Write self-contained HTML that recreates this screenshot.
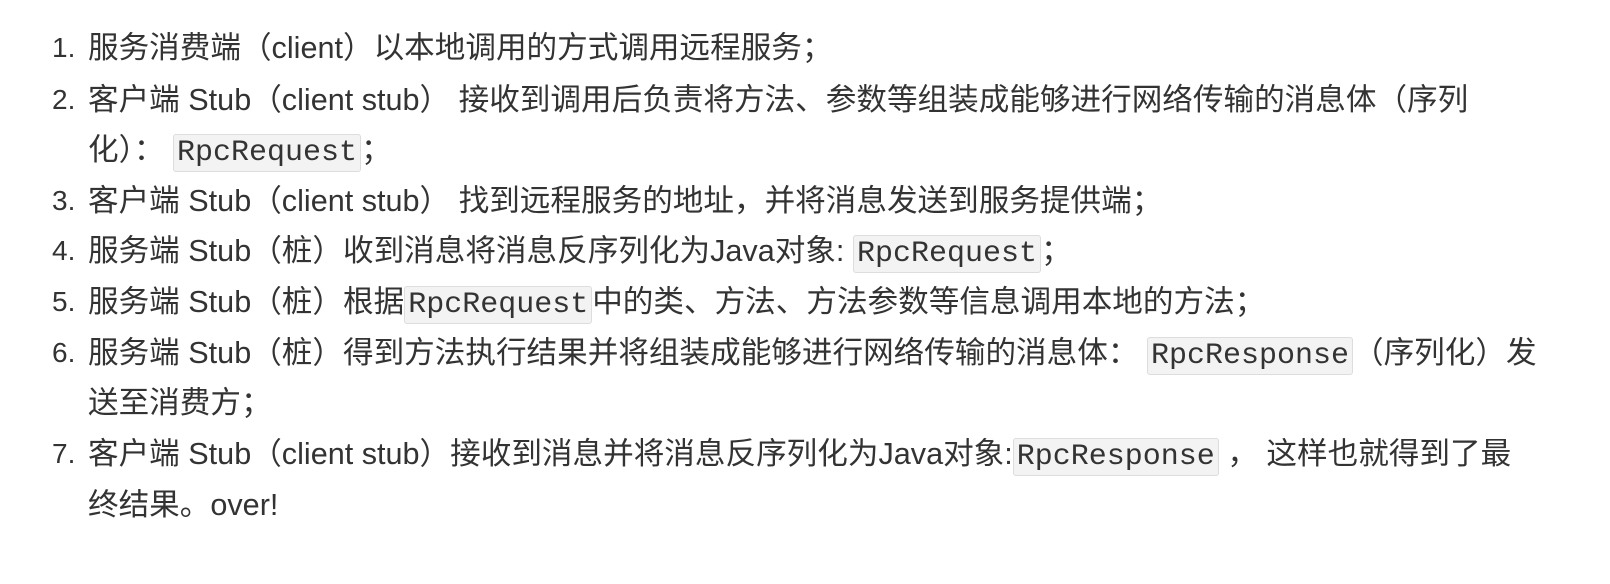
<!DOCTYPE html>
<html><head><meta charset="utf-8"><style>
body{margin:0;width:1610px;height:584px;background:#fff;overflow:hidden;font-family:"Liberation Sans","Noto Sans CJK SC",sans-serif;font-size:30.6px;color:#333;}
.l{position:absolute;left:88px;height:50px;line-height:50px;white-space:nowrap;}
.n{position:absolute;left:52px;height:50px;line-height:50px;font-size:28px;}
code{font-family:"Liberation Mono","DejaVu Sans Mono",monospace;font-size:30px;background:#f3f3f3;border:1px solid #ddd;border-radius:3px;padding:1px 3px;color:#333;}
</style></head><body>
<div class="n" style="top:23px">1.</div><div class="l" style="top:23px">服务消费端（client）以本地调用的方式调用远程服务；</div>
<div class="n" style="top:75px">2.</div><div class="l" style="top:75px">客户端 Stub（client stub） 接收到调用后负责将方法、参数等组装成能够进行网络传输的消息体（序列</div>
<div class="l" style="top:125px">化）： <code>RpcRequest</code>；</div>
<div class="n" style="top:176px">3.</div><div class="l" style="top:176px">客户端 Stub（client stub） 找到远程服务的地址，并将消息发送到服务提供端；</div>
<div class="n" style="top:226px">4.</div><div class="l" style="top:226px">服务端 Stub（桩）收到消息将消息反序列化为Java对象: <code>RpcRequest</code>；</div>
<div class="n" style="top:277px">5.</div><div class="l" style="top:277px">服务端 Stub（桩）根据<code>RpcRequest</code>中的类、方法、方法参数等信息调用本地的方法；</div>
<div class="n" style="top:328px">6.</div><div class="l" style="top:328px">服务端 Stub（桩）得到方法执行结果并将组装成能够进行网络传输的消息体： <code>RpcResponse</code>（序列化）发</div>
<div class="l" style="top:378px">送至消费方；</div>
<div class="n" style="top:429px">7.</div><div class="l" style="top:429px">客户端 Stub（client stub）接收到消息并将消息反序列化为Java对象:<code>RpcResponse</code> ， 这样也就得到了最</div>
<div class="l" style="top:480px">终结果。over!</div>
</body></html>
